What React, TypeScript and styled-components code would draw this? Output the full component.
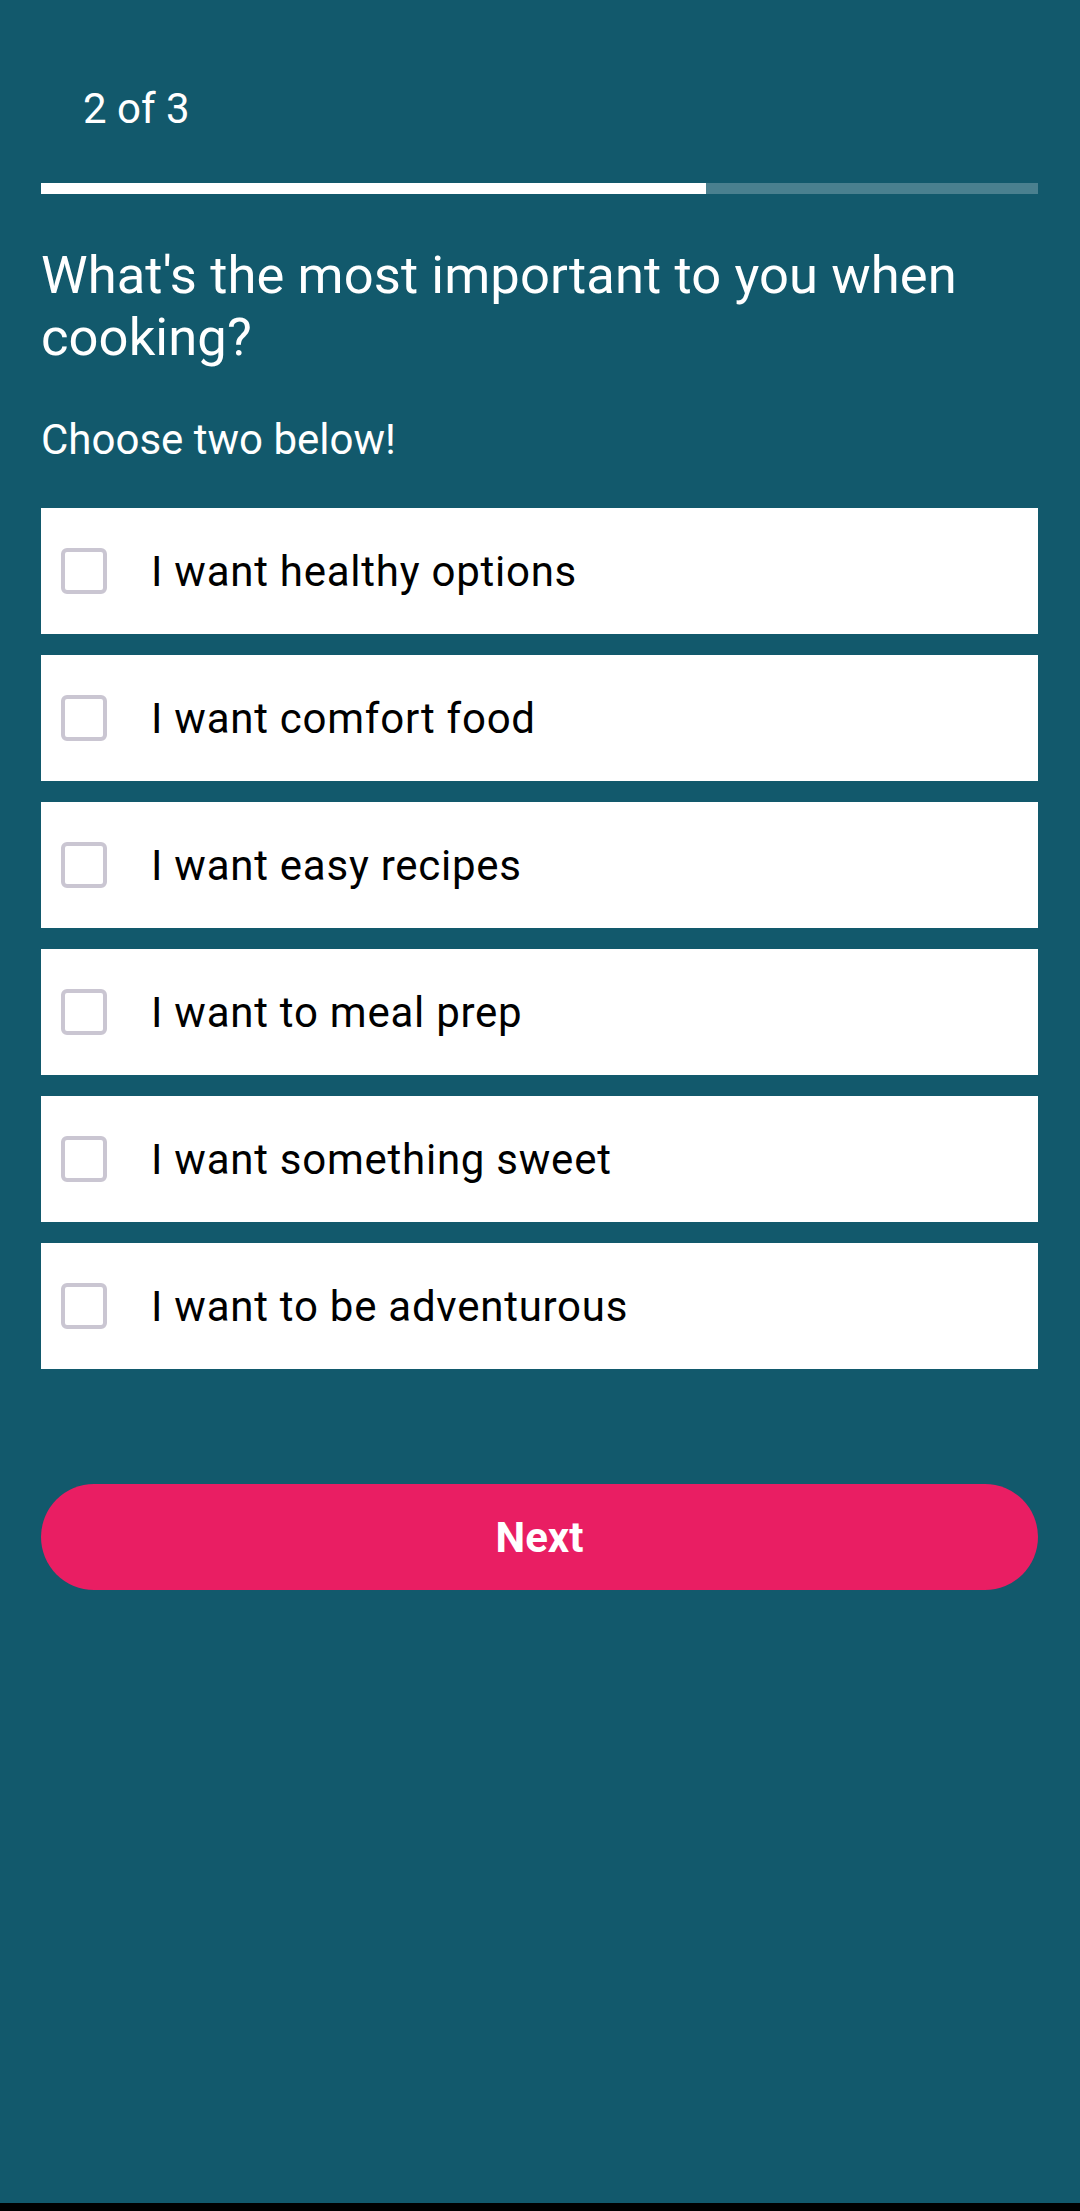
import React, { useState } from "react";
import styled, { createGlobalStyle } from "styled-components";

const GlobalStyle = createGlobalStyle`
  html, body {
    margin: 0;
    padding: 0;
    background: #12596c;
  }
  body {
    font-family: Roboto, "Noto Sans", "Liberation Sans", sans-serif;
  }
  * { box-sizing: border-box; }
`;

const Screen = styled.div`
  width: 1080px;
  height: 2211px;
  background: #12596c;
  display: flex;
  flex-direction: column;
  overflow: hidden;
`;

const Content = styled.main`
  flex: 1;
  display: flex;
  flex-direction: column;
  padding: 84px 42px 0 41px;
`;

const StepLabel = styled.div`
  color: #ffffff;
  font-size: 42px;
  line-height: 49px;
  padding-left: 42px;
`;

const Progress = styled.div`
  margin-top: 50px;
  height: 10.5px;
  width: 100%;
  background: rgba(255, 255, 255, 0.24);
  display: flex;
`;

const ProgressFill = styled.div`
  height: 100%;
  background: #ffffff;
`;

const Title = styled.h1`
  margin: 50.5px 0 0;
  color: #ffffff;
  font-size: 52.5px;
  font-weight: 400;
  line-height: 62px;
  letter-spacing: 0.1px;
`;

const Subtitle = styled.p`
  margin: 47px 0 0;
  color: #ffffff;
  font-size: 42px;
  line-height: 49px;
`;

const OptionList = styled.div`
  margin-top: 44px;
  display: flex;
  flex-direction: column;
  gap: 21px;
`;

const OptionRow = styled.label`
  height: 126px;
  background: #ffffff;
  display: flex;
  align-items: center;
  padding-left: 20px;
  gap: 44px;
  cursor: pointer;
`;

const Box = styled.span<{ $checked: boolean }>`
  width: 46px;
  height: 46px;
  flex: none;
  border: 4.5px solid ${(p) => (p.$checked ? "#e91e63" : "#cac6d2")};
  background: ${(p) => (p.$checked ? "#e91e63" : "transparent")};
  border-radius: 6px;
  display: flex;
  align-items: center;
  justify-content: center;
`;

const OptionText = styled.span`
  color: #000000;
  font-size: 42px;
  letter-spacing: 0.75px;
  line-height: 49px;
`;

const NextButton = styled.button`
  margin-top: 115px;
  height: 106px;
  width: 100%;
  border: none;
  border-radius: 53px;
  background: #e91e63;
  color: #ffffff;
  font-family: Roboto, "Noto Sans", "Liberation Sans", sans-serif;
  font-size: 42px;
  font-weight: 700;
  cursor: pointer;
`;

const NavStrip = styled.div`
  height: 8px;
  background: #000000;
  flex: none;
`;

const options = [
  "I want healthy options",
  "I want comfort food",
  "I want easy recipes",
  "I want to meal prep",
  "I want something sweet",
  "I want to be adventurous",
];

export default function App() {
  const [checked, setChecked] = useState<boolean[]>(options.map(() => false));
  const toggle = (i: number) =>
    setChecked((c) => c.map((v, j) => (j === i ? !v : v)));

  return (
    <Screen>
      <GlobalStyle />
      <Content>
        <StepLabel>2 of 3</StepLabel>
        <Progress>
          <ProgressFill style={{ width: `${(2 / 3) * 100}%` }} />
        </Progress>
        <Title>What's the most important to you when cooking?</Title>
        <Subtitle>Choose two below!</Subtitle>
        <OptionList>
          {options.map((o, i) => (
            <OptionRow key={o} onClick={() => toggle(i)}>
              <Box $checked={checked[i]}>
                {checked[i] && (
                  <svg width="30" height="30" viewBox="0 0 24 24">
                    <path d="M5 12l5 5 9-10" stroke="#fff" strokeWidth="3" fill="none" />
                  </svg>
                )}
              </Box>
              <OptionText>{o}</OptionText>
            </OptionRow>
          ))}
        </OptionList>
        <NextButton>Next</NextButton>
      </Content>
      <NavStrip />
    </Screen>
  );
}
